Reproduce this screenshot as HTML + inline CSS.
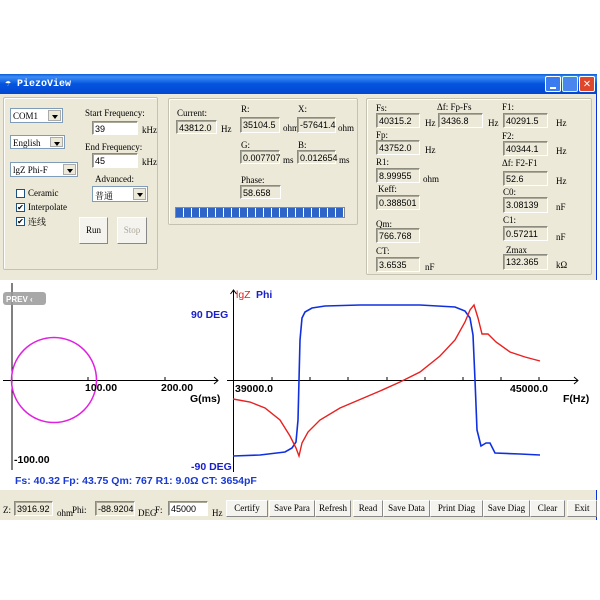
<!DOCTYPE html>
<html><head><meta charset="utf-8"><style>
*{margin:0;padding:0;box-sizing:border-box}
body{width:600px;height:600px;background:#fff;position:relative;overflow:hidden;font-family:"Liberation Serif","Noto Serif CJK SC",serif;font-size:9px;color:#000}
.a{position:absolute;white-space:nowrap}
.win{position:absolute;left:0;top:74px;width:597px;height:446px;background:#ece9d8;border-right:1px solid #0831d9}
.tb{position:absolute;left:0;top:74px;width:597px;height:20px;background:linear-gradient(#0a5fd8,#3d8cf4 15%,#0454e0 50%,#0348d0);color:#fff;font-weight:bold;font-size:10px;font-family:"Liberation Mono",monospace}
.gb{position:absolute;border:1px solid #c5c2b2;border-radius:2px;box-shadow:inset 1px 1px 0 #fff}
.in{position:absolute;background:#ece9d8;border:1px solid #8b8b80;border-right-color:#fff;border-bottom-color:#fff;box-shadow:inset 1px 1px 0 #aca899;padding:2px 0 0 2px;font-size:9px;font-family:"Liberation Sans",sans-serif}
.w{background:#fff}
.sel{position:absolute;background:#fff;border:1px solid #7f9db9;padding:2px 0 0 2px}
.sel i{position:absolute;right:1px;top:1px;bottom:1px;width:13px;background:#ece9d8;border:1px solid #aaa}
.sel i:after{content:"";position:absolute;left:3px;top:4px;border:3px solid transparent;border-top:4px solid #000}
.btn{position:absolute;background:#f4f3ee;border:1px solid #fff;border-right-color:#888;border-bottom-color:#888;text-align:center;font-size:9px}
.cb{position:absolute;width:9px;height:9px;border:1px solid #1c5180;background:#fff;font-size:8px;line-height:7px;text-align:center}
</style></head><body>
<div class="win"></div>
<div class="tb"><span class="a" style="left:5px;top:4px">☂ PiezoView</span>
<div class="a" style="left:545px;top:2px;width:16px;height:16px;background:#3a7cf0;border:1px solid #fff;border-radius:2px"><div style="position:absolute;left:4px;top:10px;width:6px;height:2px;background:#fff"></div></div>
<div class="a" style="left:562px;top:2px;width:16px;height:16px;background:#4a86ee;border:1px solid #cfe;border-radius:2px"></div>
<div class="a" style="left:579px;top:2px;width:16px;height:16px;background:#e0462a;border:1px solid #fff;border-radius:2px;text-align:center;font-size:12px;line-height:14px">✕</div></div>

<div class="gb" style="left:3px;top:97px;width:155px;height:173px"></div>
<div class="sel" style="left:10px;top:108px;width:53px;height:15px">COM1<i></i></div>
<div class="sel" style="left:10px;top:135px;width:55px;height:14px">English<i></i></div>
<div class="sel" style="left:10px;top:162px;width:68px;height:15px">lgZ Phi-F<i></i></div>
<div class="a" style="left:85px;top:108px">Start Frequency:</div>
<div class="in w" style="left:92px;top:121px;width:46px;height:14px">39</div><div class="a" style="left:142px;top:125px">kHz</div>
<div class="a" style="left:85px;top:142px">End Frequency:</div>
<div class="in w" style="left:92px;top:153px;width:46px;height:15px">45</div><div class="a" style="left:142px;top:157px">kHz</div>
<div class="a" style="left:95px;top:174px">Advanced:</div>
<div class="sel" style="left:92px;top:186px;width:56px;height:16px">普通<i></i></div>
<div class="cb" style="left:16px;top:189px"></div><div class="a" style="left:28px;top:188px">Ceramic</div>
<div class="cb" style="left:16px;top:203px">✔</div><div class="a" style="left:28px;top:202px">Interpolate</div>
<div class="cb" style="left:16px;top:217px">✔</div><div class="a" style="left:28px;top:215px">连线</div>
<div class="btn" style="left:79px;top:217px;width:29px;height:27px;line-height:25px">Run</div>
<div class="btn" style="left:117px;top:217px;width:30px;height:27px;line-height:25px;color:#aca899">Stop</div>

<div class="gb" style="left:168px;top:98px;width:190px;height:127px"></div>
<div class="a" style="left:177px;top:108px">Current:</div>
<div class="in" style="left:176px;top:120px;width:41px;height:14px">43812.0</div><div class="a" style="left:221px;top:124px">Hz</div>
<div class="a" style="left:241px;top:104px">R:</div>
<div class="in" style="left:240px;top:117px;width:40px;height:16px">35104.5</div><div class="a" style="left:283px;top:123px">ohm</div>
<div class="a" style="left:298px;top:104px">X:</div>
<div class="in" style="left:297px;top:117px;width:39px;height:16px">-57641.4</div><div class="a" style="left:338px;top:123px">ohm</div>
<div class="a" style="left:241px;top:140px">G:</div>
<div class="in" style="left:240px;top:150px;width:40px;height:14px">0.007707</div><div class="a" style="left:283px;top:155px">ms</div>
<div class="a" style="left:298px;top:140px">B:</div>
<div class="in" style="left:297px;top:150px;width:39px;height:14px">0.012654</div><div class="a" style="left:339px;top:155px">ms</div>
<div class="a" style="left:241px;top:175px">Phase:</div>
<div class="in" style="left:240px;top:185px;width:41px;height:14px">58.658</div>
<div class="a" style="left:175px;top:207px;width:170px;height:11px;border:1px solid #888;background:repeating-linear-gradient(90deg,#2e64c8 0 7px,#fff 7px 8px)"></div>

<div class="gb" style="left:366px;top:98px;width:226px;height:177px"></div>
<div class="a" style="left:376px;top:103px">Fs:</div><div class="in" style="left:376px;top:113px;width:44px;height:15px">40315.2</div><div class="a" style="left:425px;top:118px">Hz</div>
<div class="a" style="left:437px;top:102px">Δf: Fp-Fs</div><div class="in" style="left:438px;top:113px;width:45px;height:15px">3436.8</div><div class="a" style="left:488px;top:118px">Hz</div>
<div class="a" style="left:502px;top:102px">F1:</div><div class="in" style="left:503px;top:113px;width:45px;height:15px">40291.5</div><div class="a" style="left:556px;top:118px">Hz</div>
<div class="a" style="left:376px;top:130px">Fp:</div><div class="in" style="left:376px;top:140px;width:44px;height:15px">43752.0</div><div class="a" style="left:425px;top:145px">Hz</div>
<div class="a" style="left:502px;top:131px">F2:</div><div class="in" style="left:503px;top:141px;width:45px;height:15px">40344.1</div><div class="a" style="left:556px;top:146px">Hz</div>
<div class="a" style="left:376px;top:157px">R1:</div><div class="in" style="left:376px;top:168px;width:44px;height:15px">8.99955</div><div class="a" style="left:423px;top:174px">ohm</div>
<div class="a" style="left:502px;top:158px">Δf: F2-F1</div><div class="in" style="left:503px;top:171px;width:45px;height:15px">52.6</div><div class="a" style="left:556px;top:176px">Hz</div>
<div class="a" style="left:378px;top:184px">Keff:</div><div class="in" style="left:376px;top:195px;width:44px;height:15px">0.388501</div>
<div class="a" style="left:503px;top:187px">C0:</div><div class="in" style="left:503px;top:197px;width:45px;height:16px">3.08139</div><div class="a" style="left:556px;top:202px">nF</div>
<div class="a" style="left:376px;top:219px">Qm:</div><div class="in" style="left:376px;top:228px;width:44px;height:15px">766.768</div>
<div class="a" style="left:503px;top:215px">C1:</div><div class="in" style="left:503px;top:226px;width:45px;height:15px">0.57211</div><div class="a" style="left:556px;top:232px">nF</div>
<div class="a" style="left:376px;top:246px">CT:</div><div class="in" style="left:376px;top:257px;width:44px;height:15px">3.6535</div><div class="a" style="left:425px;top:262px">nF</div>
<div class="a" style="left:506px;top:245px">Zmax</div><div class="in" style="left:503px;top:254px;width:45px;height:16px">132.365</div><div class="a" style="left:556px;top:260px">kΩ</div>

<svg class="a" style="left:0;top:280px" width="597" height="210" viewBox="0 280 597 210">
<rect x="0" y="280" width="597" height="210" fill="#fff"/>
<g stroke="#000" stroke-width="1" fill="none">
<line x1="12" y1="283" x2="12" y2="470"/><line x1="3" y1="380.5" x2="218" y2="380.5"/><path d="M214 377l4 3.5-4 3.5"/>
<line x1="88" y1="377" x2="88" y2="381"/><line x1="165" y1="377" x2="165" y2="381"/>
<line x1="233.5" y1="290" x2="233.5" y2="472"/><path d="M230.5 294l3-4 3 4"/>
<line x1="227" y1="380.5" x2="578" y2="380.5"/><path d="M574 377l4 3.5-4 3.5"/>
<path d="M272 377v4M310 377v4M348 377v4M387 377v4M425 377v4M463 377v4M501 377v4M539 377v4"/>
</g>
<circle cx="54" cy="380" r="42.5" stroke="#e020e0" stroke-width="1.5" fill="none"/>
<polyline fill="none" stroke="#1030e0" stroke-width="1.6" points="233,456 260,455 285,452 292,448 296,442 298,420 299,380 300,340 302,318 305,312 312,308 325,306 360,305 420,305 455,307 465,311 470,318 473,335 475,380 477,430 481,446 486,443 490,443 495,453 520,454 540,455"/>
<polyline fill="none" stroke="#e82020" stroke-width="1.4" points="233,399 250,402 265,408 280,420 290,436 296,448 299,456 302,443 308,432 320,420 340,408 380,391 400,382 420,372 440,356 455,340 465,322 470,310 474,305 478,318 482,334 488,334 496,342 510,352 525,357 540,361"/>
<g font-family="Liberation Sans,sans-serif" font-weight="bold" font-size="10.5">
<text x="85" y="391">100.00</text><text x="161" y="391">200.00</text><text x="190" y="402">G(ms)</text>
<text x="14" y="463">-100.00</text>
<text x="235" y="392">39000.0</text><text x="510" y="392">45000.0</text><text x="563" y="402">F(Hz)</text>
<text x="191" y="318" fill="#1a20c8">90 DEG</text><text x="191" y="470" fill="#1a20c8">-90 DEG</text>
<text x="236" y="298" fill="#e02020" font-weight="normal">lgZ</text><text x="256" y="298" fill="#1a20c8">Phi</text>
<text x="15" y="484" fill="#1a3ad0">Fs: 40.32  Fp: 43.75  Qm: 767  R1: 9.0Ω  CT: 3654pF</text>
</g>
<rect x="3" y="292" width="43" height="13" rx="3" fill="#999" opacity="0.85"/>
<text x="6" y="302" fill="#fff" font-family="Liberation Sans,sans-serif" font-size="8" font-weight="bold">PREV ‹</text>
</svg>

<div class="a" style="left:3px;top:505px">Z:</div><div class="in" style="left:14px;top:501px;width:39px;height:15px">3916.92</div><div class="a" style="left:57px;top:508px">ohm</div>
<div class="a" style="left:72px;top:505px">Phi:</div><div class="in" style="left:95px;top:501px;width:40px;height:15px">-88.9204</div><div class="a" style="left:138px;top:508px">DEG</div>
<div class="a" style="left:155px;top:505px">F:</div><div class="in w" style="left:168px;top:501px;width:40px;height:15px">45000</div><div class="a" style="left:212px;top:508px">Hz</div>
<div class="btn" style="left:226px;top:500px;width:42px;height:17px;line-height:15px">Certify</div>
<div class="btn" style="left:269px;top:500px;width:46px;height:17px;line-height:15px">Save Para</div>
<div class="btn" style="left:315px;top:500px;width:36px;height:17px;line-height:15px">Refresh</div>
<div class="btn" style="left:353px;top:500px;width:30px;height:17px;line-height:15px">Read</div>
<div class="btn" style="left:383px;top:500px;width:47px;height:17px;line-height:15px">Save Data</div>
<div class="btn" style="left:430px;top:500px;width:53px;height:17px;line-height:15px">Print Diag</div>
<div class="btn" style="left:483px;top:500px;width:47px;height:17px;line-height:15px">Save Diag</div>
<div class="btn" style="left:530px;top:500px;width:35px;height:17px;line-height:15px">Clear</div>
<div class="btn" style="left:567px;top:500px;width:30px;height:17px;line-height:15px">Exit</div>
</body></html>
